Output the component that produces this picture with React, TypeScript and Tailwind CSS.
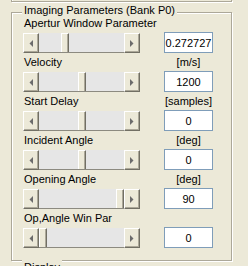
const rows = [
  { label: 'Apertur Window Parameter', unit: '', value: '0.272727', thumb: 22 },
  { label: 'Velocity', unit: '[m/s]', value: '1200', thumb: 39 },
  { label: 'Start Delay', unit: '[samples]', value: '0', thumb: 39 },
  { label: 'Incident Angle', unit: '[deg]', value: '0', thumb: 39 },
  { label: 'Opening Angle', unit: '[deg]', value: '90', thumb: 77 },
  { label: 'Op,Angle Win Par', unit: '', value: '0', thumb: 0 },
]

function ArrowButton({ dir }: { dir: 'left' | 'right' }) {
  return (
    <div className="flex h-full w-[16px] items-center justify-center border-t border-l border-t-white border-l-white border-b border-r border-b-[#716F64] border-r-[#716F64] bg-[#ECE9D8] shadow-[inset_-1px_-1px_0_#ACA899]">
      <svg width="4" height="7" viewBox="0 0 4 7">
        {dir === 'left' ? (
          <polygon points="4,0 4,7 0.5,3.5" fill="#6b6b6b" />
        ) : (
          <polygon points="0,0 0,7 3.5,3.5" fill="#6b6b6b" />
        )}
      </svg>
    </div>
  )
}

function ScrollBar({ thumb }: { thumb: number }) {
  return (
    <div className="flex h-[20px] w-[117px]">
      <ArrowButton dir="left" />
      <div className="flex flex-1 border-b border-b-[#8C8A80] bg-[#E6E6E6]">
        <div style={{ width: thumb }} />
        <div className="h-full w-[8px] border-l border-t border-l-white border-t-white border-r border-r-[#716F64] bg-[#ECE9D8] shadow-[inset_-1px_0_0_#ACA899]" />
      </div>
      <ArrowButton dir="right" />
    </div>
  )
}

export default function App() {
  return (
    <div className="h-[266px] w-[248px] overflow-hidden bg-[#ECE9D8] font-['Liberation_Sans',Arial,sans-serif] text-[11px] text-black">
      {/* bottom of previous group */}
      <div className="ml-[11px] h-[2px] w-[221px] border-x border-b border-[#ACA899] shadow-[inset_1px_0_0_#fff,1px_1px_0_#fff]" />

      {/* Imaging Parameters group */}
      <div className="relative ml-[11px] mt-[10px] h-[249px] w-[221px] border border-[#ACA899] pl-[11px] pt-[1px] shadow-[inset_1px_1px_0_#fff,1px_1px_0_#fff]">
        <span className="absolute left-[10px] top-[-9px] bg-[#ECE9D8] px-[2px] leading-[13px]">
          Imaging Parameters (Bank P0)
        </span>

        {rows.map((r) => (
          <div key={r.label} className="flex flex-col">
            <div className="flex h-[18px] items-center leading-[18px]">
              <span className="flex-1 pl-[1px]">{r.label}</span>
              <span className="mr-[18px] w-[49px] text-center">{r.unit}</span>
            </div>
            <div className="flex h-[21px] items-end">
              <ScrollBar thumb={r.thumb} />
              <input
                readOnly
                value={r.value}
                className="ml-[24px] h-[21px] w-[49px] border border-[#7F9DB9] bg-white text-center text-[11px] text-black outline-none"
              />
            </div>
          </div>
        ))}

        {/* Display group legend */}
        <span className="absolute left-[10px] top-[246px] bg-[#ECE9D8] px-[2px] pt-[2px] leading-[13px]">
          Display
        </span>
      </div>
    </div>
  )
}
